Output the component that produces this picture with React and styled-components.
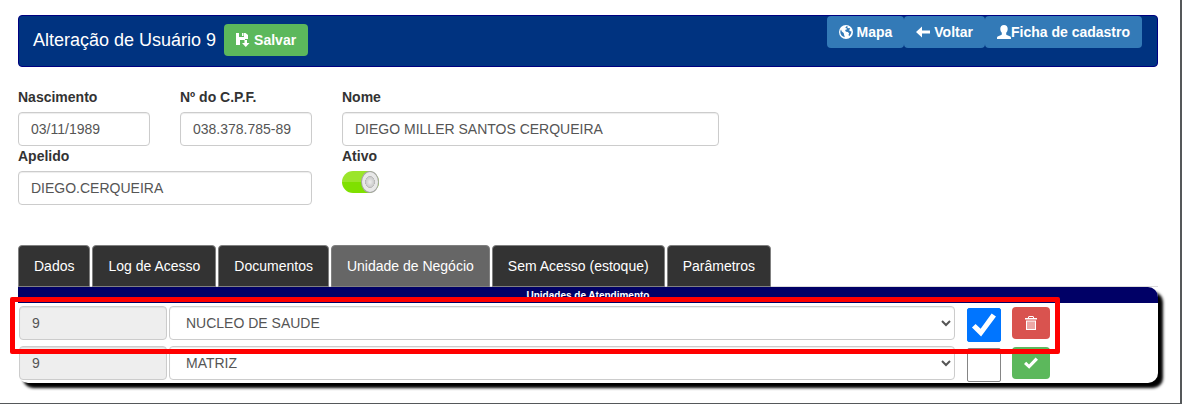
import React, { useState } from "react";
import styled, { createGlobalStyle, css } from "styled-components";

const GlobalStyle = createGlobalStyle`
  *, *::before { box-sizing: border-box; }
  body {
    margin: 0;
    background: #fff;
    color: #333;
    font: 14px/20px "Liberation Sans", Arial, sans-serif;
  }
  input, select, button { font: inherit; }
`;

const Page = styled.main`
  min-height: 100vh;
  padding: 15px 22px 16px 18px;
  border-right: 2px solid #55585a;
  border-bottom: 1px solid #55585a;
`;

const Header = styled.header`
  display: flex;
  justify-content: space-between;
  align-items: flex-start;
  height: 52px;
  padding: 0 15px 0 14px;
  border: 1px solid #000080;
  border-radius: 4px;
  background: #003380;
`;

const Heading = styled.div`
  display: flex;
  align-items: center;
  gap: 8px;
  padding-top: 8px;
`;

const Title = styled.h1`
  margin: 0;
  color: #fff;
  font-size: 18px;
  font-weight: 400;
  line-height: 20px;
`;

const tones = {
  success: "#5cb85c",
  primary: "#337ab7",
  danger: "#d9534f",
};

const buttonLook = css`
  display: inline-flex;
  align-items: center;
  justify-content: center;
  gap: ${(p) => (p.$tight ? 0 : 4)}px;
  height: 32px;
  padding: 0 12px;
  border: 0;
  border-radius: 4px;
  background: ${(p) => tones[p.$tone]};
  color: #fff;
  font-weight: 700;
  line-height: 20px;
  text-decoration: none;
  white-space: nowrap;
  cursor: pointer;
`;

const Button = styled.button`${buttonLook}`;
const LinkButton = styled.a`${buttonLook}`;

const Actions = styled.nav`
  display: flex;
`;

const Glyph = styled.svg`
  flex: none;
  width: 14px;
  height: 14px;
  fill: currentColor;
`;

const Form = styled.form`
  display: grid;
  grid-template-columns: 132fr 132fr 377fr 409fr;
  column-gap: 30px;
  margin-top: 20px;
`;

const Field = styled.div`
  grid-column: ${(p) => p.$column};
  display: flex;
  flex-direction: column;
  align-items: flex-start;
  gap: 5px;
`;

const Label = styled.label`
  font-weight: 700;
`;

const control = css`
  display: block;
  width: 100%;
  height: 34px;
  padding: 6px 12px;
  border: 1px solid #ccc;
  border-radius: 4px;
  background: #fff;
  color: #555;
  box-shadow: inset 0 1px 1px rgba(0, 0, 0, 0.075);
`;

const TextInput = styled.input`
  ${control}
  &:read-only { background: #eee; }
`;

const Select = styled.select`${control}`;

const Switch = styled.input`
  appearance: none;
  display: flex;
  justify-content: flex-end;
  width: 37px;
  height: 22px;
  margin: 0;
  border-radius: 11px;
  background: linear-gradient(#9be52a 0 50%, #7fe000 50% 100%);
  cursor: pointer;

  &::before {
    content: "";
    width: 18px;
    height: 22px;
    border: 1px solid #a4a4a4;
    border-radius: 9px / 11px;
    background: radial-gradient(ellipse 5px 6px at center, #eee 0, #ccc 80%, #b4b4b4 95%, #e8e8e8 100%);
  }
  &:not(:checked) { justify-content: flex-start; background: #bbb; }
`;

const Tabs = styled.div`
  display: flex;
  gap: 2px;
  margin-top: 40px;
  border-bottom: 1px solid #ddd;
`;

const Tab = styled.button`
  height: 42px;
  margin-bottom: -1px;
  padding: 0 15px;
  border: 1px solid #808080;
  border-radius: 4px 4px 0 0;
  background: ${(p) => (p.$active ? "#666" : "#333")};
  color: #fff;
  white-space: nowrap;
  cursor: pointer;
`;

const Panel = styled.section`
  position: relative;
  border-radius: 0 10px 10px 10px;
  background: #fff;
  box-shadow: 5px 5px 3px #000;
`;

const Units = styled.table`
  width: 100%;
  table-layout: fixed;
  border-collapse: separate;
  border-spacing: 0;
`;

const UnitsTitle = styled.th`
  height: 16px;
  padding: 1px 0 0;
  border-radius: 0 10px 0 0;
  background: #006;
  color: #fff;
  font-size: 10px;
  line-height: 15px;
`;

const Column = styled.col`
  width: ${(p) => p.$width};
`;

const Cell = styled.td`
  height: 40px;
  padding: 0 1px;
  vertical-align: middle;
`;

const Centered = styled.div`
  display: flex;
  justify-content: center;
  padding-top: ${(p) => p.$drop || 0}px;
`;

const Check = styled.input`
  appearance: none;
  display: grid;
  place-items: center;
  width: 34px;
  height: 34px;
  margin: 0;
  border: 1px solid #858585;
  border-radius: 2px;
  background: #fff;
  cursor: pointer;

  &:checked { border-color: #0075ff; background: #0075ff; }
  &:checked::before {
    content: "";
    width: 24px;
    height: 24px;
    background: #fff;
    clip-path: polygon(0 60%, 15% 46%, 36% 66%, 82% 2%, 100% 15%, 38% 98%);
  }
`;

const Highlight = styled.div`
  position: absolute;
  top: 10px;
  left: -8px;
  right: 98px;
  height: 57px;
  border: 5px solid #f00;
  border-radius: 2px;
  pointer-events: none;
`;

const icons = {
  save: "M0 0h3v4h5V0h1.500L12 2v4H9v1H4v5H0zM6 0h1.500v3H6zM8.500 7h2.500v3h2.500L9.800 14 6 10h2.500z",
  globe: "M7 0a7 7 0 1 0 0 14A7 7 0 0 0 7 0zM7 1.300c.8 0 1.500.2 2.200.5L8.200 2.600l.8.7 1.500-.3.6.9-.9.9.5 1.200 1.700.5c-.1 2-1 3.600-2.400 4.700l-.4-1.600.5-1.300-1.300-1.300-1.700-.2-1-1.100.7-1.300 1.100.1-.2-1.200-1.400-.3.700-1.300zM2 4.400l.8 2.200 1.900 1.300.3 1.700.8 2.600C3.300 11.700 1.300 9.600 1.300 7c0-1 .2-1.800.7-2.600z",
  back: "M6 1.500V5.500h8v3H6v4L0 7z",
  user: "M7 0c2.300 0 3.700 1.400 3.700 3.700 0 1.900-.7 3.200-1.500 4.100v1.500c0 .4.200.6.600.8l3 1.200c.8.300 1.200.8 1.200 1.500V14H0v-1.200c0-.7.400-1.200 1.200-1.500l3-1.200c.4-.2.6-.4.600-.8V7.800C4 6.900 3.300 5.600 3.300 3.700 3.300 1.400 4.700 0 7 0z",
  trash: "M5 0h4l1 1v1h3v1.500H1V2h3V1zM5 1v1h4V1zM2 4.500h10V14H2zM3.500 5.500V13h1V5.500zM5.500 5.500V13h1V5.500zM7.500 5.500V13h1V5.500zM9.500 5.500V13h1V5.500z",
  ok: "M0 8l2.200-2.300L5 8.400 11.600 1.500 14 3.700 5.200 12.800z",
};

function Icon({ name }) {
  return (
    <Glyph viewBox="0 0 14 14" aria-hidden="true">
      <path fillRule="evenodd" d={icons[name]} />
    </Glyph>
  );
}

function TextField({ id, label, column, value }) {
  return (
    <Field $column={column}>
      <Label htmlFor={id}>{label}</Label>
      <TextInput id={id} defaultValue={value} />
    </Field>
  );
}

const tabs = ["Dados", "Log de Acesso", "Documentos", "Unidade de Negócio", "Sem Acesso (estoque)", "Parâmetros"];

const units = [
  { code: "9", name: "NUCLEO DE SAUDE", enabled: true, tone: "danger", icon: "trash", action: "Excluir" },
  { code: "9", name: "MATRIZ", enabled: false, tone: "success", icon: "ok", action: "Confirmar" },
];

export default function App() {
  const [active, setActive] = useState(3);
  return (
    <Page>
      <GlobalStyle />
      <Header>
        <Heading>
          <Title>Alteração de Usuário 9</Title>
          <Button type="submit" form="user" $tone="success"><Icon name="save" />Salvar</Button>
        </Heading>
        <Actions>
          <LinkButton href="#mapa" $tone="primary"><Icon name="globe" />Mapa</LinkButton>
          <LinkButton href="#voltar" $tone="primary"><Icon name="back" />Voltar</LinkButton>
          <LinkButton href="#ficha" $tone="primary" $tight><Icon name="user" />Ficha de cadastro</LinkButton>
        </Actions>
      </Header>

      <Form id="user" onSubmit={(e) => e.preventDefault()}>
        <TextField id="nascimento" label="Nascimento" column="1" value="03/11/1989" />
        <TextField id="cpf" label="Nº do C.P.F." column="2" value="038.378.785-89" />
        <TextField id="nome" label="Nome" column="3" value="DIEGO MILLER SANTOS CERQUEIRA" />
        <TextField id="apelido" label="Apelido" column="1 / span 2" value="DIEGO.CERQUEIRA" />
        <Field $column="3">
          <Label htmlFor="ativo">Ativo</Label>
          <Switch id="ativo" type="checkbox" role="switch" defaultChecked />
        </Field>
      </Form>

      <Tabs role="tablist">
        {tabs.map((tab, i) => (
          <Tab key={tab} type="button" role="tab" aria-selected={i === active} $active={i === active} onClick={() => setActive(i)}>
            {tab}
          </Tab>
        ))}
      </Tabs>

      <Panel>
        <Units>
          <colgroup>
            <Column $width="150px" />
            <Column />
            <Column $width="56px" />
            <Column $width="38px" />
            <Column $width="108px" />
          </colgroup>
          <thead>
            <tr><UnitsTitle colSpan={5}>Unidades de Atendimento</UnitsTitle></tr>
          </thead>
          <tbody>
            {units.map((unit) => (
              <tr key={unit.name}>
                <Cell><TextInput aria-label="Código" value={unit.code} readOnly /></Cell>
                <Cell>
                  <Select aria-label="Unidade" defaultValue={unit.name}>
                    {units.map((u) => <option key={u.name}>{u.name}</option>)}
                  </Select>
                </Cell>
                <Cell><Centered $drop={4}><Check type="checkbox" aria-label={unit.name} defaultChecked={unit.enabled} /></Centered></Cell>
                <Cell><Centered><Button type="button" $tone={unit.tone} aria-label={unit.action}><Icon name={unit.icon} /></Button></Centered></Cell>
                <Cell />
              </tr>
            ))}
          </tbody>
        </Units>
        <Highlight />
      </Panel>
    </Page>
  );
}
